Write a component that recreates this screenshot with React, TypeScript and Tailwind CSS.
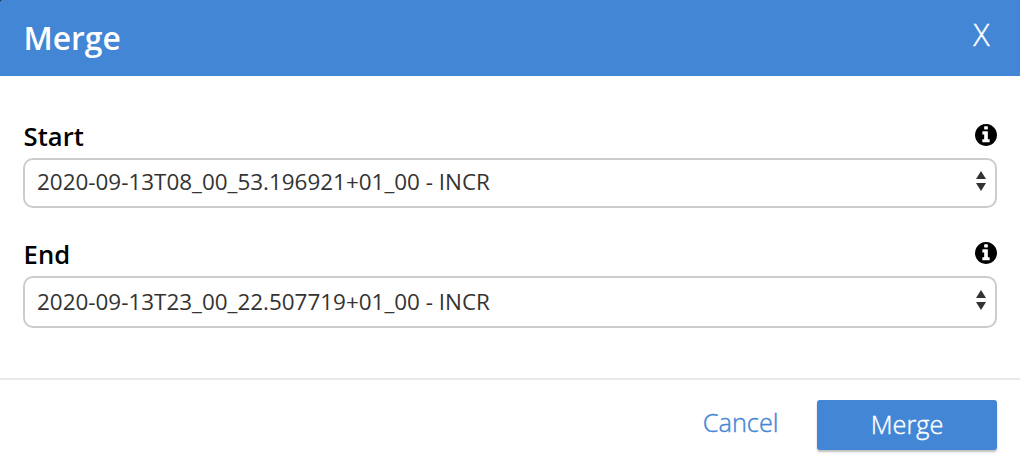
function InfoIcon() {
  return (
    <svg width="22" height="22" viewBox="128 128 1536 1536" fill="currentColor">
      <path d="M1152 1376v-160q0-14-9-23t-23-9h-96v-512q0-14-9-23t-23-9h-320q-14 0-23 9t-9 23v160q0 14 9 23t23 9h96v320h-96q-14 0-23 9t-9 23v160q0 14 9 23t23 9h448q14 0 23-9t9-23zm-128-896v-160q0-14-9-23t-23-9h-192q-14 0-23 9t-9 23v160q0 14 9 23t23 9h192q14 0 23-9t9-23zm640 416q0 209-103 385.5t-279.5 279.5-385.5 103-385.5-103-279.5-279.5-103-385.5 103-385.5 279.5-279.5 385.5-103 385.5 103 279.5 279.5 103 385.5z" />
    </svg>
  );
}

function Arrows() {
  return (
    <svg width="10" height="20" viewBox="0 0 10 20" fill="#333">
      <path d="M5 0 L10 8 H0 Z M0 12 H10 L5 20 Z" />
    </svg>
  );
}

export default function App() {
  return (
    <div className="flex h-[468px] w-[1020px] flex-col bg-white font-['Open_Sans',sans-serif] text-black">
      <div className="shrink-0 bg-[#111]">
        <header className="flex h-[76px] items-center justify-between rounded-tl-[2px] bg-[#4386d5] pr-[30.5px] pl-[23.5px] text-white">
          <h1 className="text-[31.8px] leading-[44px] font-semibold">Merge</h1>
          <button className="pb-1.5 text-[30.4px] leading-[40px] font-light [-webkit-text-stroke:0.4px]">X</button>
        </header>
      </div>
      <main className="flex h-[302px] shrink-0 flex-col px-[23px] pt-11">
        <div className="flex h-[38px] items-start justify-between">
          <label className="pl-[0.6px] text-[25.6px] leading-[33px] font-semibold">Start</label>
          <span className="pt-1"><InfoIcon /></span>
        </div>
        <div className="flex h-[50px] items-center justify-between rounded-[10px] border-2 border-[#ccc] pr-[9px] pl-3 text-[22.45px] text-[#333]">
          <span className="pb-[3px]">2020-09-13T08_00_53.196921+01_00 - INCR</span>
          <span className="pb-1"><Arrows /></span>
        </div>
        <div className="mt-[30px] flex h-[38px] items-start justify-between">
          <label className="pl-[0.6px] text-[25.6px] leading-[33px] font-semibold">End</label>
          <span className="pt-1"><InfoIcon /></span>
        </div>
        <div className="flex h-[52px] items-center justify-between rounded-[10px] border-2 border-[#ccc] pr-[9px] pl-3 text-[22.45px] text-[#333]">
          <span>2020-09-13T23_00_22.507719+01_00 - INCR</span>
          <span className="pb-1"><Arrows /></span>
        </div>
      </main>
      <footer className="flex h-[90px] items-start justify-end border-t-2 border-[#e8e8e8] pt-5 pr-[23px]">
        <button className="mr-[38.5px] h-[46px] text-[25.3px] font-light text-[#4386d5] [-webkit-text-stroke:0.4px]">Cancel</button>
        <button className="h-[50px] w-[180px] rounded-[3px] bg-[#4386d5] text-[25.3px] font-light text-white shadow-[0_2px_2px_rgba(0,0,0,0.25)] [-webkit-text-stroke:0.4px]">Merge</button>
      </footer>
    </div>
  );
}
